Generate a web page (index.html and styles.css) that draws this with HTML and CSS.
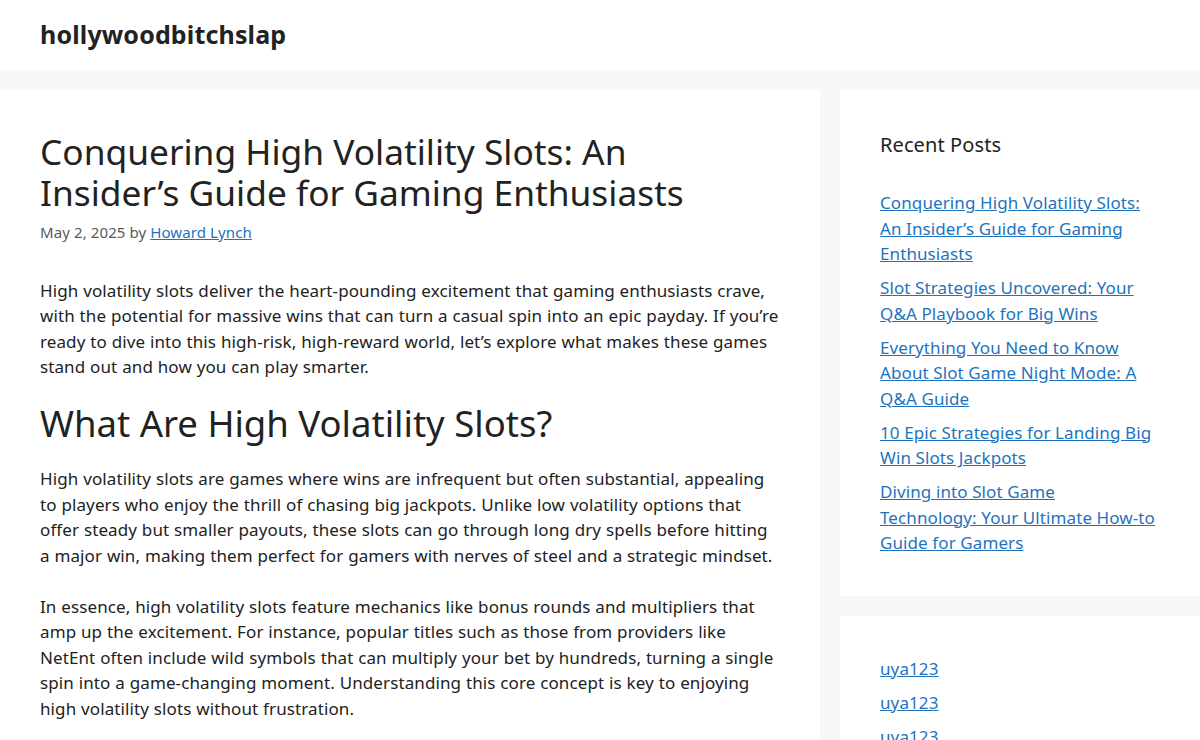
FILE: index.html
```html
<!DOCTYPE html>
<html lang="en">
<head>
    <meta charset="UTF-8">
    <title>Conquering High Volatility Slots - hollywoodbitchslap</title>
    <link rel="stylesheet" href="styles.css">
</head>
<body>
    <header class="site-header">
        <a class="site-title" href="#">hollywoodbitchslap</a>
    </header>

    <div class="site-content">
        <main class="content-area">
            <article class="post">
                <h1 class="entry-title">Conquering High Volatility Slots: An Insider’s Guide for Gaming Enthusiasts</h1>
                <div class="entry-meta">May 2, 2025 by <a href="#">Howard Lynch</a></div>

                <div class="entry-content">
                    <p>High volatility slots deliver the heart-pounding excitement that gaming enthusiasts crave, with the potential for massive wins that can turn a casual spin into an epic payday. If you’re ready to dive into this high-risk, high-reward world, let’s explore what makes these games stand out and how you can play smarter.</p>

                    <h2>What Are High Volatility Slots?</h2>

                    <p>High volatility slots are games where wins are infrequent but often substantial, appealing to players who enjoy the thrill of chasing big jackpots. Unlike low volatility options that offer steady but smaller payouts, these slots can go through long dry spells before hitting a major win, making them perfect for gamers with nerves of steel and a strategic mindset.</p>

                    <p>In essence, high volatility slots feature mechanics like bonus rounds and multipliers that amp up the excitement. For instance, popular titles such as those from providers like NetEnt often include wild symbols that can multiply your bet by hundreds, turning a single spin into a game-changing moment. Understanding this core concept is key to enjoying high volatility slots without frustration.</p>
                </div>
            </article>
        </main>

        <aside class="sidebar">
            <section class="widget">
                <h2 class="widget-title">Recent Posts</h2>
                <ul>
                    <li><a href="#">Conquering High Volatility Slots: An Insider’s Guide for Gaming Enthusiasts</a></li>
                    <li><a href="#">Slot Strategies Uncovered: Your Q&amp;A Playbook for Big Wins</a></li>
                    <li><a href="#">Everything You Need to Know About Slot Game Night Mode: A Q&amp;A Guide</a></li>
                    <li><a href="#">10 Epic Strategies for Landing Big Win Slots Jackpots</a></li>
                    <li><a href="#">Diving into Slot Game<br>Technology: Your Ultimate How&#8209;to Guide for Gamers</a></li>
                </ul>
            </section>
            <section class="widget">
                <ul>
                    <li><a href="#">uya123</a></li>
                    <li><a href="#">uya123</a></li>
                    <li><a href="#">uya123</a></li>
                    <li><a href="#">uya123</a></li>
                </ul>
            </section>
        </aside>
    </div>
</body>
</html>
```

FILE: styles.css
```css
body {
    margin: 0;
    background: #f7f8f9;
    color: #222;
    font-family: "Segoe UI", "Noto Sans", sans-serif;
    font-size: 17px;
    line-height: 1.5;
    letter-spacing: .1px;
}
a {
    color: #1e73be;
}
.site-header {
    background: #fff;
    padding: 19px 40px 21px;
}
.site-title {
    display: block;
    color: #222;
    font-size: 25px;
    font-weight: bold;
    line-height: 30px;
    letter-spacing: .15px;
    text-decoration: none;
}
.site-content {
    display: flex;
    gap: 20px;
    padding-top: 20px;
}
.content-area {
    width: 820px;
    flex-shrink: 0;
}
.post {
    background: #fff;
    padding: 41px 40px 40px;
}
.entry-title {
    max-width: 660px;
    margin: 0;
    font-size: 35.3px;
    font-weight: normal;
    line-height: 41px;
    letter-spacing: 0;
}
.entry-meta {
    margin-top: 8px;
    font-size: 15px;
    color: #595959;
}
.entry-content {
    margin-top: 2em;
    word-spacing: .3px;
}
.entry-content p {
    margin: 0 0 1.5em;
}
.entry-content h2 {
    margin: -2px 0 22px;
    font-size: 36.5px;
    font-weight: normal;
    line-height: 41px;
    letter-spacing: 0;
    word-spacing: 0;
}
.sidebar {
    flex: 1;
}
.widget {
    background: #fff;
    padding: 40px;
    margin-bottom: 20px;
}
.widget-title {
    margin: 0 0 30px;
    font-size: 20px;
    font-weight: normal;
    line-height: 1.5;
}
.widget ul {
    list-style: none;
    margin: 0;
    padding: 0;
}
.widget li {
    margin-bottom: .5em;
}
.widget li:last-child {
    margin-bottom: 0;
}
```
